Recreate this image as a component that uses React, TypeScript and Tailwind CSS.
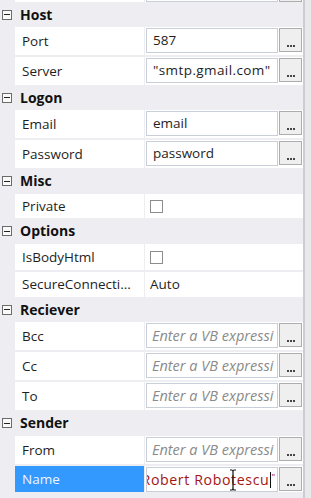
import React from "react";

function Header({ label, h }: { label: string; h: string }) {
  return (
    <div className={`flex items-center ${h}`}>
      <div className="ml-[2px] w-[10px] h-[10px] border border-[#6b6b6b] bg-[#fafafa] flex items-center justify-center">
        <div className="w-[6px] h-[1px] bg-[#222]" />
      </div>
      <span className="ml-[8px] font-bold text-[14px] text-[#111] leading-none">{label}</span>
    </div>
  );
}

function Row({
  name,
  h,
  mt = "",
  selected = false,
  children,
}: {
  name: string;
  h: string;
  mt?: string;
  selected?: boolean;
  children?: React.ReactNode;
}) {
  return (
    <div className={`flex ${h} ${mt}`}>
      <div className="w-[15px] shrink-0" />
      <div
        className={`w-[129px] shrink-0 flex items-center pl-[7px] text-[13.5px] whitespace-nowrap overflow-hidden ${
          selected ? "bg-[#3399ff] text-[#eef5ff]" : "bg-white text-[#1e1e1e]"
        }`}
      >
        {name}
      </div>
      <div className="w-[1px] shrink-0" />
      <div className="w-[158px] shrink-0 bg-white flex">{children}</div>
    </div>
  );
}

function Dots() {
  return (
    <div className="ml-[1px] w-[23px] h-[24px] border border-[#adadad] bg-[#efefef] flex items-end justify-center pb-[4px]">
      <div className="flex gap-[1px]">
        <div className="w-[2px] h-[2px] bg-[#444]" />
        <div className="w-[2px] h-[2px] bg-[#444]" />
        <div className="w-[2px] h-[2px] bg-[#444]" />
      </div>
    </div>
  );
}

function TB({ children }: { children?: React.ReactNode }) {
  return (
    <div className="flex pt-[1px]">
      <div className="ml-[1px] w-[132px] h-[25px] border border-[#c8cfd9] bg-white flex items-center pl-[6px] overflow-hidden whitespace-nowrap text-[13.5px] text-[#1e1e1e]">
        {children}
      </div>
      <Dots />
    </div>
  );
}

function Placeholder() {
  return <span className="italic text-[14.5px] text-[#8a8a8a] -ml-[1px]">Enter a VB expressi</span>;
}

function Check() {
  return (
    <div className="flex items-center h-full pl-[5px]">
      <div className="w-[13px] h-[13px] border border-[#8c8c8c] bg-white" />
    </div>
  );
}

export default function App() {
  return (
    <div className="w-[311px] h-[498px] overflow-hidden flex bg-[#eeeef2] font-['Open_Sans',sans-serif]">
      <div className="w-[303px] shrink-0 flex flex-col">
        {/* partial top row */}
        <div className="flex h-[2px]">
          <div className="w-[15px] shrink-0" />
          <div className="w-[129px] shrink-0 bg-white" />
          <div className="w-[1px] shrink-0" />
          <div className="w-[158px] shrink-0 bg-white flex">
            <div className="ml-[1px] w-[132px] h-[2px] border-x border-b border-[#c8cfd9]" />
            <div className="ml-[1px] w-[23px] h-[2px] border-x border-b border-[#adadad] bg-[#efefef]" />
          </div>
        </div>

        <Header label="Host" h="h-[25px]" />
        <Row name="Port" h="h-[28px]">
          <TB>587</TB>
        </Row>
        <Row name="Server" h="h-[28px]" mt="mt-[2px]">
          <TB>
            <span className="tracking-[0.4px]">"smtp.gmail.com"</span>
          </TB>
        </Row>

        <Header label="Logon" h="h-[25px]" />
        <Row name="Email" h="h-[28px]">
          <TB>email</TB>
        </Row>
        <Row name="Password" h="h-[28px]" mt="mt-[2px]">
          <TB>password</TB>
        </Row>

        <Header label="Misc" h="h-[26px]" />
        <Row name="Private" h="h-[24px]">
          <Check />
        </Row>

        <Header label="Options" h="h-[26px]" />
        <Row name="IsBodyHtml" h="h-[26px]">
          <Check />
        </Row>
        <Row name="SecureConnecti..." h="h-[25px]" mt="mt-[2px]">
          <div className="flex items-center h-full pl-[5px] text-[13.5px] text-[#1e1e1e]">Auto</div>
        </Row>

        <Header label="Reciever" h="h-[25px]" />
        <Row name="Bcc" h="h-[28px]">
          <TB>
            <Placeholder />
          </TB>
        </Row>
        <Row name="Cc" h="h-[28px]" mt="mt-[2px]">
          <TB>
            <Placeholder />
          </TB>
        </Row>
        <Row name="To" h="h-[28px]" mt="mt-[2px]">
          <TB>
            <Placeholder />
          </TB>
        </Row>

        <Header label="Sender" h="h-[26px]" />
        <Row name="From" h="h-[28px]">
          <TB>
            <Placeholder />
          </TB>
        </Row>
        <Row name="Name" h="h-[26px]" mt="mt-[2px]" selected>
          <div className="flex pt-[1px]">
            <div className="relative ml-[1px] w-[132px] h-[25px] border border-[#c8cfd9] bg-white flex items-center justify-end pr-[2px] overflow-hidden whitespace-nowrap text-[14.2px] text-[#a31515]">
              <span className="shrink-0 tracking-[0.6px]">Robert Robotescu</span>
              <span className="shrink-0 ml-[1px] w-[1px] h-[16px] bg-[#111]" />
              <span className="shrink-0 text-[9px] self-start mt-[3px]">"</span>
              <svg
                className="absolute left-[82px] top-[1px]"
                width="8"
                height="22"
                viewBox="0 0 8 22"
              >
                <path d="M1 1 H3 Q4 1 4 3 V19 Q4 21 3 21 H1 M7 1 H5 Q4 1 4 3 M4 19 Q4 21 5 21 H7" fill="none" stroke="#111" strokeWidth="1.2" />
              </svg>
            </div>
            <Dots />
          </div>
        </Row>
      </div>
      <div className="w-[2px] shrink-0 bg-[#cdcdd1]" />
      <div className="flex-1 bg-[#e9e9ec]" />
    </div>
  );
}
